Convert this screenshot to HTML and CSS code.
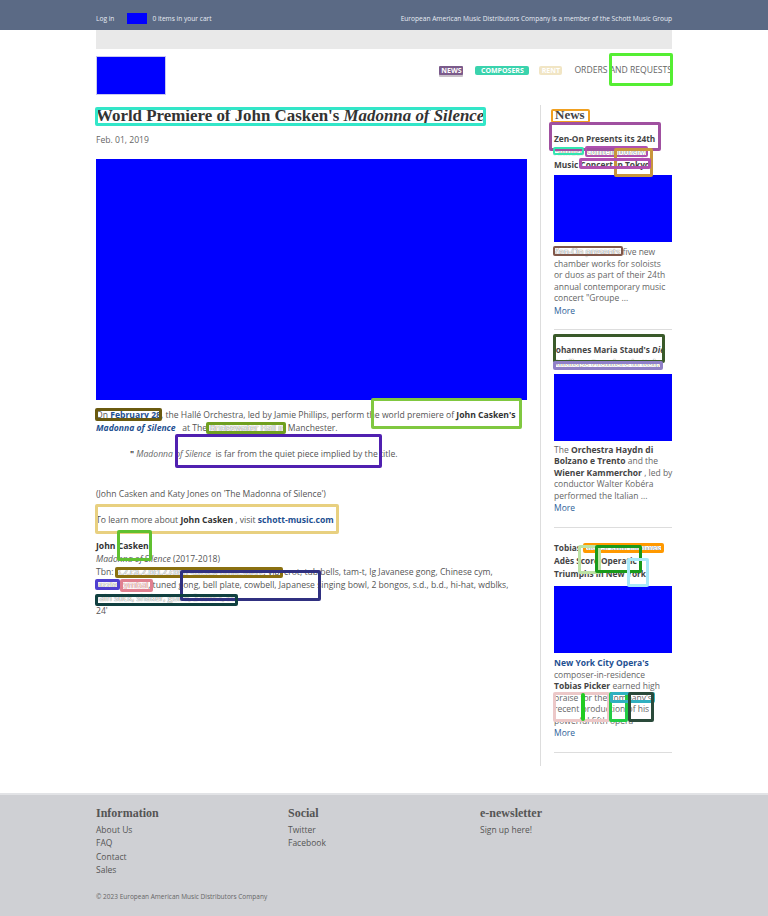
FILE: index.html
```html
<!DOCTYPE html>
<html>
<head>
<meta charset="utf-8">
<title>World Premiere of John Casken's Madonna of Silence</title>
<link rel="stylesheet" href="styles.css">
</head>
<body>
<div class="topbar">
  <div class="wrap topbar-in">
    <div class="tb-left"><span>Log in</span><span class="cart-ico"></span><span>0 items in your cart</span></div>
    <div>European American Music Distributors Company is a member of the Schott Music Group</div>
  </div>
</div>
<div class="wrap greybar"></div>
<header class="wrap header">
  <div class="logo"></div>
  <nav class="nav">
    <span class="badge b-news">NEWS</span>
    <span class="badge b-comp">COMPOSERS</span>
    <span class="badge b-rent">RENT</span>
    <span class="nav-link">ORDERS AND REQUESTS</span>
  </nav>
</header>
<div class="wrap main">
  <article class="article">
    <h1 class="title">World Premiere of John Casken's <em>Madonna of Silence</em></h1>
    <div class="date">Feb. 01, 2019</div>
    <div class="hero"></div>
    <p class="nw">On <a class="lnk"><b>February 28</b></a>, the Hallé Orchestra, led by Jamie Phillips, perform the world premiere of <b>John Casken's</b><br><a class="lnk"><b><i>Madonna of Silence</i></b></a> &nbsp; at The <span class="mask">Bridgewater Hall in</span> Manchester.</p>
    <p class="quote"><b>"</b> <i>Madonna of Silence</i> &nbsp;is far from the quiet piece implied by the title.</p>
    <p class="gap">(John Casken and Katy Jones on 'The Madonna of Silence')</p>
    <p>To learn more about <b>John Casken</b> , visit <a class="lnk"><b>schott-music.com</b></a> .</p>
    <p class="work nw"><b>John Casken</b><br><i>Madonna of Silence</i> (2017-2018)<br>Tbn: <span class="mask">3.2.ca.2.bcl.2.cbsn-4.0.0.0-timp.3perc</span>, vib, crot, tub bells, tam-t, lg Javanese gong, Chinese cym,<br><span class="mask">sizzle</span> <span class="mask2">cymbal</span>, tuned gong, bell plate, cowbell, Japanese singing bowl, 2 bongos, s.d., b.d., hi-hat, wdblks,<br><span class="mask">rain stick, shaker, guiro, 2 tom-t, str</span><br>24'</p>
  </article>
  <aside class="side">
    <h2 class="side-h">News</h2>
    <div class="item first">
      <h3 class="it-title">Zen-On Presents its 24th<br><span class="mask">Annual</span> <span class="mask">Contemporary</span><br>Music Concert in Tokyo</h3>
      <div class="thumb"></div>
      <p class="it-text"><span class="mask">Zen-On presents</span> five new<br>chamber works for soloists<br>or duos as part of their 24th<br>annual contemporary music<br>concert "Groupe ...</p>
      <a class="more">More</a>
    </div>
    <div class="item">
      <h3 class="it-title clip">Johannes Maria Staud's <i>Die</i></h3>
      <h3 class="it-title"><span class="mask">Antilope Premiere in Italy</span></h3>
      <div class="thumb t2"></div>
      <p class="it-text">The <b>Orchestra Haydn di</b><br><b>Bolzano e Trento</b> and the<br><b>Wiener Kammerchor</b> , led by<br>conductor Walter Kobéra<br>performed the Italian ...</p>
      <a class="more">More</a>
    </div>
    <div class="item">
      <h3 class="it-title">Tobias <span class="mask">Picker and Thomas</span><br>Adès Score Operatic<br>Triumphs in New York</h3>
      <div class="thumb t3"></div>
      <p class="it-text"><a class="lnk"><b>New York City Opera's</b></a><br>composer-in-residence<br><b>Tobias Picker</b> earned high<br>praise for the company's<br>recent production of his<br>powerful fifth opera</p>
      <a class="more">More</a>
    </div>
  </aside>
</div>
<footer class="footer">
  <div class="wrap">
    <div class="f-cols">
      <div class="f-col">
        <h4 class="f-h">Information</h4>
        <a class="f-l">About Us</a>
        <a class="f-l">FAQ</a>
        <a class="f-l">Contact</a>
        <a class="f-l">Sales</a>
      </div>
      <div class="f-col">
        <h4 class="f-h">Social</h4>
        <a class="f-l">Twitter</a>
        <a class="f-l">Facebook</a>
      </div>
      <div class="f-col">
        <h4 class="f-h">e-newsletter</h4>
        <a class="f-l">Sign up here!</a>
      </div>
    </div>
    <div class="copy">© 2023 European American Music Distributors Company</div>
  </div>
</footer>
<div class="marks">
  <div class="mk m1"></div>
  <div class="mk m2"></div>
  <div class="mk m3"></div>
  <div class="mk m4"></div>
  <div class="mk m5"></div>
  <div class="mk m6"></div>
  <div class="mk m7"></div>
  <div class="mk m8"></div>
  <div class="mk m9"></div>
  <div class="mk m10"></div>
  <div class="mk m11"></div>
  <div class="mk m12"></div>
  <div class="mk m13"></div>
  <div class="mk m14"></div>
  <div class="mk m15"></div>
  <div class="mk m16"></div>
  <div class="mk m17"></div>
  <div class="mk m18"></div>
  <div class="mk m19"></div>
  <div class="mk m20"></div>
  <div class="mk m21"></div>
  <div class="mk m22"></div>
  <div class="mk m23"></div>
  <div class="mk m24"></div>
  <div class="mk m25"></div>
  <div class="mk m26"></div>
  <div class="mk m27"></div>
  <div class="mk m28"></div>
  <div class="mk m29"></div>
  <div class="mk m30"></div>
  <div class="mk m31"></div>
</div>
</body>
</html>
```
FILE: styles.css
```css
* { box-sizing: border-box; }
html, body { margin: 0; padding: 0; }
body {
  width: 768px;
  min-height: 916px;
  position: relative;
  font-family: "Open Sans", "Liberation Sans", sans-serif;
  color: #555;
  background: #fff;
  font-size: 8.6px;
  line-height: 13px;
}
.wrap { width: 576px; margin: 0 auto; }
a { color: inherit; text-decoration: none; }
.nw { white-space: nowrap; }

.topbar { background: #5b6a85; height: 30px; }
.topbar-in {
  height: 30px;
  padding-top: 7px;
  display: flex;
  align-items: center;
  justify-content: space-between;
  font-size: 6.6px;
  color: #e8ecf4;
}
.tb-left { display: flex; align-items: center; }
.cart-ico { width: 20px; height: 11px; background: #0000ff; margin: 0 5px 0 13px; }

.greybar { height: 19px; background: #e9e9e9; }

.header {
  display: flex;
  justify-content: space-between;
  align-items: flex-start;
  height: 56px;
  padding-top: 7px;
}
.logo { width: 70px; height: 39px; background: #0000ff; border: 1px solid #c8c8f0; }
.nav { display: flex; align-items: center; padding-top: 8px; }
.badge {
  font-size: 7px;
  line-height: 9px;
  height: 9px;
  color: #fff;
  font-weight: 700;
  border-radius: 1px;
  text-align: center;
  margin-right: 12px;
}
.b-news { width: 24px; background: #7b5b8b; box-shadow: 0 2px 0 #c8c0c8; }
.b-comp { width: 54px; background: #3ad3ad; border-radius: 2px; margin-right: 10px; }
.b-rent { width: 23px; background: #f1e5c4; border-radius: 2px; }
.nav-link { font-size: 8.6px; color: #666; }

.main { display: flex; gap: 13px; align-items: flex-start; }
.article { width: 431px; padding-top: 1px; }
.title {
  font-family: "Liberation Serif", "Times New Roman", serif;
  font-size: 16.9px;
  line-height: 20px;
  font-weight: 700;
  color: #333;
  margin: 0;
}
.title em { font-style: italic; }
.date { margin-top: 8px; font-size: 8.6px; line-height: 13px; color: #666; }
.hero { height: 241px; background: #0000ff; margin-top: 12px; margin-bottom: 9px; }
.article p { margin: 0 0 13px; }
.lnk { color: #1d4f91; }
.article b { color: #333; }
.lnk b { color: #1d4f91; }
.quote { padding-left: 34px; }
.quote i { color: #666; }
.gap { margin-top: 27px !important; }
.mask { color: #fff; text-shadow: 0 0 1px #777, 0 0 1px #888; }
.mask2 { color: #fff; text-shadow: 0 0 1px #b55, 0 0 1px #b55; }

.side {
  width: 132px;
  border-left: 1px solid #ddd;
  padding: 2px 0 13px 13px;
}
.side-h {
  font-family: "Liberation Serif", "Times New Roman", serif;
  font-size: 13px;
  line-height: 16px;
  margin: 0;
  color: #444;
  padding-left: 1px;
}
.item { border-bottom: 1px solid #ddd; padding: 13px 0 13px; }
.item.first { padding: 9px 0 12px; }
.it-title {
  margin: 0;
  font-size: 8.3px;
  line-height: 13px;
  font-weight: 700;
  color: #444;
  white-space: nowrap;
}
.clip { overflow: hidden; margin-left: -1px; }
.thumb { height: 67px; background: #0000ff; margin: 4px 0 4px; }
.t2 { margin-top: 5px; margin-bottom: 3px; }
.t3 { margin-top: 6px; }
.it-text { margin: 0; font-size: 8.5px; line-height: 11.5px; color: #666; white-space: nowrap; }
.it-text b { color: #444; }
.it-text .lnk b { color: #1d4f91; }
.more { display: block; color: #2e5f9a; font-size: 8.5px; line-height: 13px; }

.footer {
  margin-top: 27px;
  background: #cfd0d4;
  border-top: 2px solid #e2e3e6;
  padding-top: 10px;
  height: 124px;
}
.f-cols { display: flex; }
.f-col { width: 192px; display: flex; flex-direction: column; }
.f-h {
  font-family: "Liberation Serif", "Times New Roman", serif;
  font-size: 12px;
  line-height: 16px;
  margin: 0 0 2px;
  color: #555;
  font-weight: 700;
}
.f-l { font-size: 8.5px; line-height: 13.3px; color: #555; }
.copy { font-size: 6.5px; margin-top: 14px; color: #666; }

.marks { position: absolute; left: 0; top: 0; width: 768px; height: 916px; pointer-events: none; }
.mk { position: absolute; border: 3px solid; border-radius: 2px; }
.m1 { left: 609px; top: 53px; width: 64px; height: 33px; border-color: #55ee33; }
.m2 { left: 95px; top: 107px; width: 391px; height: 19px; border-color: #33e6c8; }
.m3 { left: 551px; top: 109px; width: 39px; height: 14px; border-color: #f0a020; border-width: 2px; }
.m4 { left: 549px; top: 122px; width: 112px; height: 29px; border-color: #a050a0; }
.m5 { left: 553px; top: 147px; width: 31px; height: 8px; border-color: #33e6b0; border-width: 2px; }
.m6 { left: 585px; top: 146px; width: 63px; height: 11px; border-color: #b050b0; border-width: 2px; }
.m7 { left: 614px; top: 148px; width: 39px; height: 29px; border-color: #c8963c; }
.m8 { left: 579px; top: 158px; width: 72px; height: 11px; border-color: #b050b0; }
.m9 { left: 553px; top: 246px; width: 70px; height: 10px; border-color: #80574a; border-width: 2px; }
.m10 { left: 553px; top: 334px; width: 112px; height: 29px; border-color: #3a5a2a; }
.m11 { left: 553px; top: 361px; width: 110px; height: 9px; border-color: #9080c8; }
.m12 { left: 583px; top: 543px; width: 81px; height: 10px; border-color: #ff9900; }
.m13 { left: 578px; top: 545px; width: 23px; height: 29px; border-color: #bde3a5; }
.m14 { left: 595px; top: 545px; width: 47px; height: 28px; border-color: #1a9a1a; }
.m15 { left: 627px; top: 558px; width: 22px; height: 29px; border-color: #a8e8f8; }
.m16 { left: 553px; top: 692px; width: 57px; height: 30px; border-color: #ecc8c8; }
.m17 { left: 581px; top: 693px; width: 4px; height: 28px; border-color: #22cc22; border-width: 2px; }
.m18 { left: 609px; top: 692px; width: 19px; height: 30px; border-color: #22cc44; }
.m19 { left: 610px; top: 692px; width: 45px; height: 11px; border-color: #30b0c0; }
.m20 { left: 628px; top: 692px; width: 26px; height: 30px; border-color: #2a4a3a; }
.m21 { left: 95px; top: 408px; width: 67px; height: 13px; border-color: #6a5a10; }
.m22 { left: 371px; top: 398px; width: 151px; height: 31px; border-color: #80c840; }
.m23 { left: 206px; top: 422px; width: 80px; height: 12px; border-color: #70a020; }
.m24 { left: 175px; top: 434px; width: 207px; height: 34px; border-color: #5020b0; }
.m25 { left: 95px; top: 504px; width: 244px; height: 30px; border-color: #e8d080; }
.m26 { left: 117px; top: 530px; width: 35px; height: 31px; border-color: #60c030; }
.m27 { left: 115px; top: 567px; width: 168px; height: 11px; border-color: #8a7010; }
.m28 { left: 180px; top: 570px; width: 141px; height: 31px; border-color: #303080; }
.m29 { left: 95px; top: 579px; width: 25px; height: 11px; border-color: #5040d0; }
.m30 { left: 120px; top: 579px; width: 33px; height: 13px; border-color: #e08090; }
.m31 { left: 95px; top: 594px; width: 143px; height: 12px; border-color: #104040; }
```
